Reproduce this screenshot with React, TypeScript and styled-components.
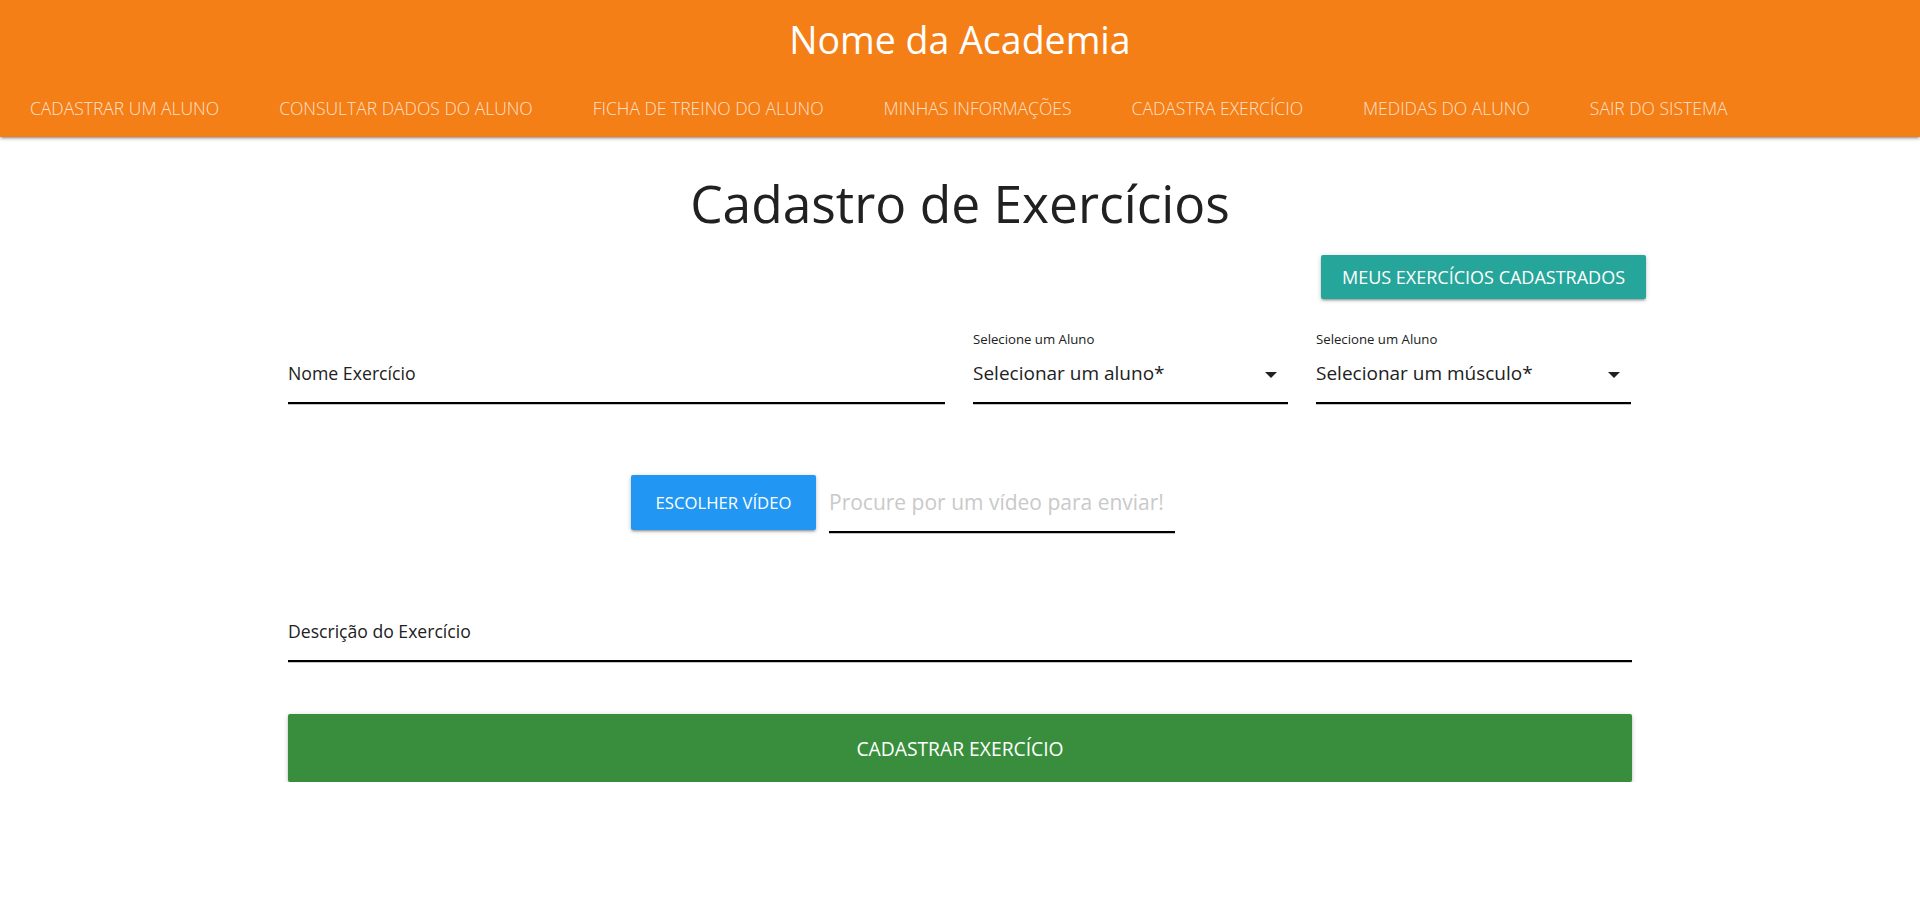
import React from "react";
import styled, { createGlobalStyle } from "styled-components";

const Global = createGlobalStyle`
  html, body { margin: 0; padding: 0; background: #fff; }
  body { font-family: "Open Sans", "Noto Sans", sans-serif; color: #212121; }
  * { box-sizing: border-box; }
`;

const Header = styled.header`
  height: 137px;
  background: #f57f17;
  box-shadow: 0 2px 2px 0 rgba(0,0,0,0.14), 0 3px 1px -2px rgba(0,0,0,0.12), 0 1px 5px 0 rgba(0,0,0,0.2);
  display: flex;
  flex-direction: column;
`;

const Brand = styled.div`
  height: 80px;
  line-height: 80px;
  text-align: center;
  color: #fff;
  font-size: 37.5px;
  font-weight: 400;
`;

const Nav = styled.nav`
  height: 55px;
  display: flex;
  align-items: center;
`;

const NavItem = styled.a`
  padding: 0 30px;
  color: rgba(255, 255, 255, 0.78);
  font-size: 17.5px;
  font-weight: 300;
  text-transform: uppercase;
  text-decoration: none;
  white-space: nowrap;
`;

const Container = styled.main`
  width: 1344px;
  margin: 0 auto;
  display: flex;
  flex-direction: column;
`;

const Title = styled.h1`
  margin: 31px 0 0;
  height: 70px;
  line-height: 70px;
  text-align: center;
  font-size: 51.5px;
  font-weight: 400;
  color: #212121;
`;

const ActionRow = styled.div`
  display: flex;
  justify-content: flex-end;
  margin: 17px -14px 0 0;
`;

const Button = styled.button<{ $bg: string; $h: number; $size: number; $w?: string }>`
  height: ${(p) => p.$h}px;
  width: ${(p) => p.$w ?? "auto"};
  padding: 0 17px;
  border: none;
  border-radius: 2px;
  background: ${(p) => p.$bg};
  color: #fff;
  font-family: inherit;
  font-size: ${(p) => p.$size}px;
  text-transform: uppercase;
  white-space: nowrap;
  box-shadow: 0 2px 2px 0 rgba(0,0,0,0.14), 0 3px 1px -2px rgba(0,0,0,0.12), 0 1px 5px 0 rgba(0,0,0,0.2);
  cursor: pointer;
  flex-shrink: 0;
`;

const FormRow = styled.div`
  display: grid;
  grid-template-columns: 657px 315px 315px;
  column-gap: 28px;
  align-items: end;
  margin-top: 30.5px;
`;

const Field = styled.div`
  display: flex;
  flex-direction: column;
`;

const SmallLabel = styled.div`
  font-size: 13.2px;
  line-height: 18px;
  height: 18px;
  margin-bottom: 9.5px;
  color: #212121;
`;

const Value = styled.div<{ $size: number }>`
  height: 47px;
  line-height: 33px;
  font-size: ${(p) => p.$size}px;
  color: #212121;
  border-bottom: 2px solid #000;
  box-shadow: 0 1px 0 0 #c4c4c4;
  display: flex;
  justify-content: space-between;
  align-items: flex-start;
  white-space: nowrap;
`;

const Caret = styled.span`
  width: 0;
  height: 0;
  margin: 15px 11px 0 0;
  border-left: 6px solid transparent;
  border-right: 6px solid transparent;
  border-top: 6px solid #212121;
`;

const VideoRow = styled.div`
  display: flex;
  align-items: flex-end;
  gap: 13px;
  width: 544px;
  margin: 71px 0 0 343px;
`;

const VideoInput = styled.div`
  flex: 1;
  height: 58px;
  line-height: 30px;
  padding-top: 12px;
  font-size: 21px;
  color: #c9c9c9;
  border-bottom: 2px solid #000;
  box-shadow: 0 1px 0 0 #c4c4c4;
  margin-bottom: -3px;
  white-space: nowrap;
  overflow: hidden;
`;

const DescField = styled.div`
  margin-top: 85px;
`;

const SubmitRow = styled.div`
  display: flex;
  margin-top: 52px;
`;

const navItems = [
  "Cadastrar um aluno",
  "Consultar dados do aluno",
  "Ficha de treino do aluno",
  "Minhas informações",
  "Cadastra exercício",
  "Medidas do aluno",
  "Sair do sistema",
];

export default function App() {
  return (
    <>
      <Global />
      <Header>
        <Brand>Nome da Academia</Brand>
        <Nav>
          {navItems.map((n) => (
            <NavItem key={n} href="#">
              {n}
            </NavItem>
          ))}
        </Nav>
      </Header>
      <Container>
        <Title>Cadastro de Exercícios</Title>
        <ActionRow>
          <Button $bg="#26a69a" $h={44} $size={18} $w="325px">
            Meus exercícios cadastrados
          </Button>
        </ActionRow>
        <FormRow>
          <Field>
            <Value $size={17.7}>Nome Exercício</Value>
          </Field>
          <Field>
            <SmallLabel>Selecione um Aluno</SmallLabel>
            <Value $size={19}>
              Selecionar um aluno*
              <Caret />
            </Value>
          </Field>
          <Field>
            <SmallLabel>Selecione um Aluno</SmallLabel>
            <Value $size={19}>
              Selecionar um músculo*
              <Caret />
            </Value>
          </Field>
        </FormRow>
        <VideoRow>
          <Button $bg="#2196f3" $h={55} $size={16.7} $w="185px">
            Escolher vídeo
          </Button>
          <VideoInput>Procure por um vídeo para enviar!</VideoInput>
        </VideoRow>
        <DescField>
          <Value $size={17.6}>Descrição do Exercício</Value>
        </DescField>
        <SubmitRow>
          <Button $bg="#388e3c" $h={68} $size={19.3} $w="100%">
            Cadastrar exercício
          </Button>
        </SubmitRow>
      </Container>
    </>
  );
}
